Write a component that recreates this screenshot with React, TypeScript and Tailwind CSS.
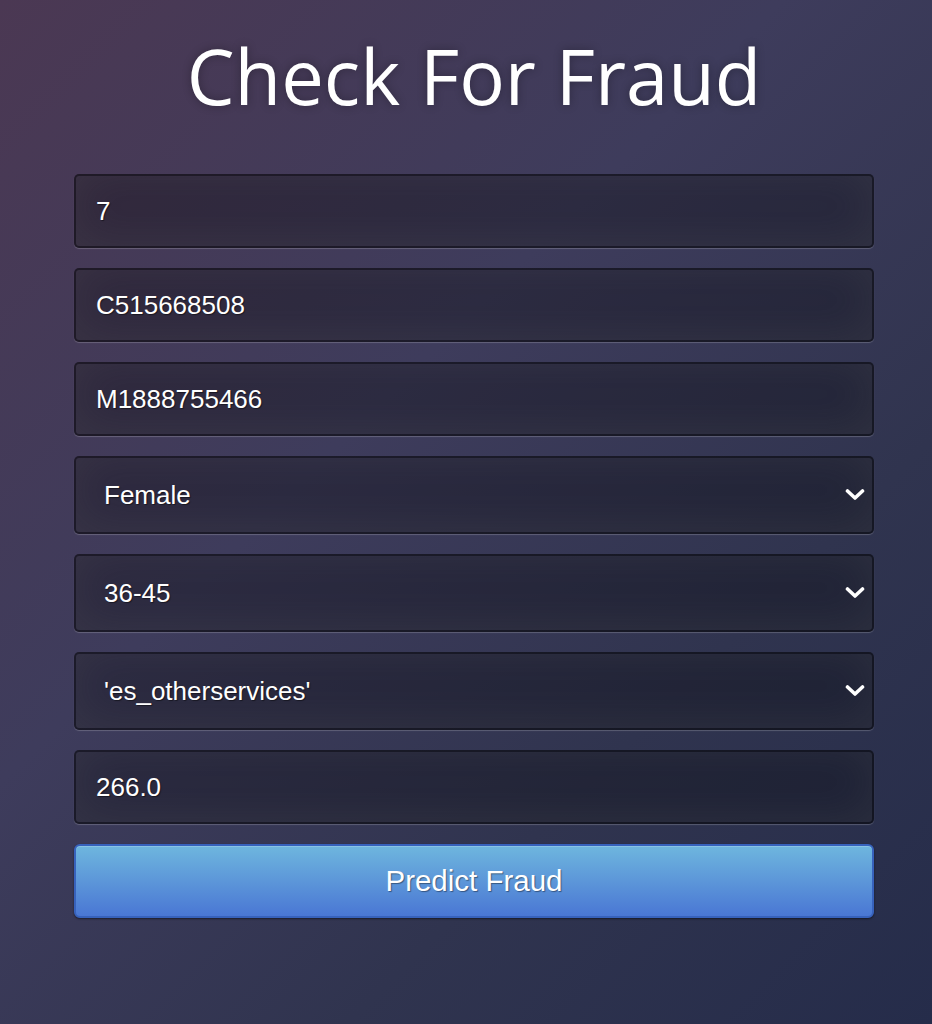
const fieldBase =
  "w-full rounded-[5px] border-2 border-[rgba(0,0,0,0.35)] bg-[rgba(0,0,0,0.3)] text-white text-[26px] [text-shadow:1px_1px_1px_rgba(0,0,0,0.45)] shadow-[inset_0_-5px_45px_rgba(100,100,100,0.2),0_1px_1px_rgba(255,255,255,0.2)] outline-none";

function Chevron() {
  return (
    <svg width="20" height="14" viewBox="0 0 20 14" fill="none">
      <path d="M2.5 3 L10 10 L17.5 3" stroke="white" strokeWidth="3.6" strokeLinecap="round" strokeLinejoin="round" />
    </svg>
  );
}

export default function App() {
  return (
    <div className="min-h-screen w-full bg-[linear-gradient(135deg,#4b3853_0%,#3e3c5c_40%,#30344f_70%,#252c4a_100%)] font-['Liberation_Sans',Arial,sans-serif]">
      <div className="w-[932px] h-[1024px] flex flex-col items-center pt-[38px] pl-[16px]">
        {/* Title */}
        <h1 className="font-['Open_Sans',sans-serif] text-white text-[76px] leading-[76px] [text-shadow:0_0_10px_rgba(0,0,0,0.3)]">
          Check For Fraud
        </h1>

        {/* Form */}
        <form className="w-[800px] mt-[60px] flex flex-col">
          <input className={`${fieldBase} h-[74px] px-[20px]`} defaultValue="7" />
          <input className={`${fieldBase} h-[74px] px-[20px] mt-[20px]`} defaultValue="C515668508" />
          <input className={`${fieldBase} h-[74px] px-[20px] mt-[20px]`} defaultValue="M1888755466" />

          {["Female", "36-45", "'es_otherservices'"].map((v, i) => (
            <div key={i} className={`${fieldBase} h-[78px] mt-[20px] flex items-center justify-between pl-[28px] pr-[7px]`}>
              <span>{v}</span>
              <Chevron />
            </div>
          ))}

          <input className={`${fieldBase} h-[74px] px-[20px] mt-[20px]`} defaultValue="266.0" />

          <button
            type="button"
            className="mt-[20px] h-[74px] w-full rounded-[6px] border-2 border-[#3762bc] bg-[linear-gradient(to_bottom,#6eb6de,#4a77d4)] text-white text-[29.5px] [text-shadow:1px_1px_1px_rgba(0,0,0,0.4)] shadow-[inset_0_1px_0_rgba(255,255,255,0.2),0_1px_2px_rgba(0,0,0,0.5)]"
          >
            Predict Fraud
          </button>
        </form>
      </div>
    </div>
  );
}
